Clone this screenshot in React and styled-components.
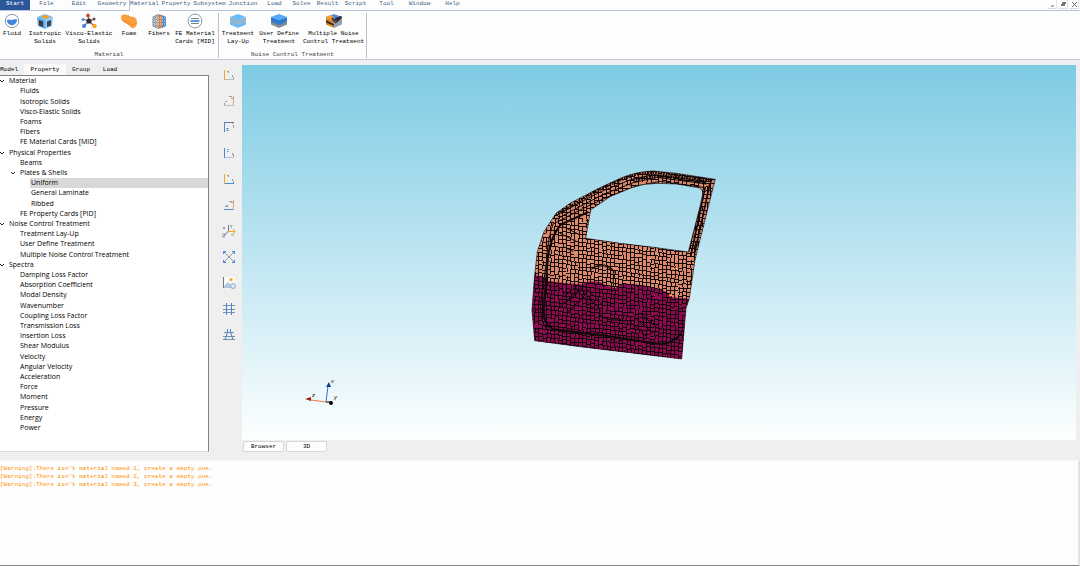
import React, { useState } from 'react';
import styled, { createGlobalStyle } from 'styled-components';

const mono = '"Liberation Mono", monospace';

const GlobalStyle = createGlobalStyle`
  * {
    box-sizing: border-box;
  }

  body {
    margin: 0;
    background-color: #efefef;
    font-family: ${mono};
    font-size: 6px;
    color: #111;
  }

  button {
    margin: 0;
    padding: 0;
    border: none;
    background: none;
    font: inherit;
    color: inherit;
    cursor: pointer;
  }
`;

const Window = styled.div`
  display: flex;
  flex-direction: column;
  height: 100vh;
  overflow: hidden;
`;

const MenuBar = styled.nav`
  display: flex;
  flex: none;
  height: 11px;
  background-color: #fdfdfd;
  border-bottom: 1px solid #b4c6de;
`;

const MenuItem = styled.button`
  width: ${(props) => props.$width}px;
  height: ${(props) => (props.$active ? 11 : 10)}px;
  line-height: 8px;
  padding-bottom: ${(props) => (props.$active ? 3 : 2)}px;
  color: ${(props) => (props.$primary ? '#fff' : '#3f6186')};
  background-color: ${(props) => (props.$primary ? '#2b579a' : '#fdfdfd')};
  border-left: ${(props) => (props.$active ? '1px solid #b4c6de' : 'none')};
  white-space: nowrap;
`;

const WindowControls = styled.div`
  display: flex;
  gap: 2px;
  margin-left: auto;
  padding-right: 1px;
`;

const WindowButton = styled.button`
  display: flex;
  width: 9px;
  height: 9px;
  align-items: center;
  justify-content: center;
  background-color: #fff;
  border-right: 1px solid #e4e4e4;
  border-bottom: 1px solid #dcdcdc;
`;

const Ribbon = styled.div`
  display: flex;
  flex: none;
  height: 49px;
  background-color: #fdfdfd;
  border-bottom: 1px solid #bccad8;
`;

const RibbonGroup = styled.section`
  display: flex;
  flex-direction: column;
  margin: 2px 0 1px;
  border-right: 1px solid #bcc2c8;
`;

const RibbonTools = styled.div`
  display: flex;
  flex: 1;
`;

const RibbonButton = styled.button`
  display: flex;
  flex-direction: column;
  align-items: center;
  width: ${(props) => props.$width}px;
  line-height: 8px;
  white-space: pre;
  color: #000;

  svg {
    flex: none;
    margin-bottom: 1px;
  }
`;

const GroupLabel = styled.div`
  line-height: 7px;
  text-align: center;
  color: #444;
`;

const Main = styled.main`
  display: flex;
  flex: 1;
  min-height: 0;
`;

const Sidebar = styled.aside`
  display: flex;
  flex-direction: column;
  width: 209px;
  padding: 4px 0 8px;
`;

const TabList = styled.div`
  display: flex;
  flex: none;
  height: 11px;
`;

const Tab = styled.button`
  width: ${(props) => props.$width}px;
  background-color: ${(props) => (props.$active ? '#fafafa' : 'transparent')};
  color: #000;
  line-height: 10px;

  &:first-child {
    text-align: left;
  }
`;

const Tree = styled.div`
  display: flex;
  flex: 1;
  flex-direction: column;
  min-height: 0;
  padding-bottom: 18px;
  background-color: #fff;
  border-top: 1px solid #828387;
  border-right: 1px solid #828387;
  border-bottom: 1px solid #dcdcdc;
  font-family: "Open Sans", sans-serif;
  font-size: 7px;
  color: #000;
`;

const TreeRow = styled.div`
  display: flex;
  flex: 1;
  min-height: 0;
  padding-left: ${(props) => props.$level * 11}px;
`;

const Toggle = styled.span`
  display: flex;
  width: 8px;
  align-items: center;
`;

const TreeLabel = styled.button`
  display: flex;
  flex: 1;
  align-items: center;
  padding-left: 1px;
  line-height: 10px;
  text-align: left;
  white-space: nowrap;
  background-color: ${(props) => (props.$selected ? '#d8d8d8' : 'transparent')};
`;

const ViewTools = styled.div`
  display: flex;
  flex-direction: column;
  align-items: center;
  gap: 10px;
  width: 33px;
  padding: 7px 0 0 6px;
`;

const ViewButton = styled.button`
  display: flex;
  width: 16px;
  height: 16px;
`;

const Workspace = styled.div`
  display: flex;
  flex: 1;
  flex-direction: column;
  min-width: 0;
  padding: 5px 4px 8px 0;
`;

const Viewport = styled.div`
  flex: 1;
  min-height: 0;
  background: linear-gradient(#7ecbe4, #fdffff);

  svg {
    display: block;
    width: 100%;
    height: 100%;
  }
`;

const ViewTabs = styled.div`
  display: flex;
  gap: 2px;
  padding: 1px 0 0 1px;
`;

const ViewTab = styled.button`
  width: 41px;
  height: 11px;
  color: #000;
  background-color: #fdfdfd;
  border: 1px solid #d6d6d6;
  border-radius: 2px;
  line-height: 8px;
`;

const Log = styled.div`
  flex: none;
  height: 106px;
  padding-top: 4px;
  background-color: #fdfdfd;
  border-top: 1px solid #f6f6f6;
  border-right: 2px solid #e2e2e2;
  border-bottom: 1px solid #828387;
  line-height: 8px;
  color: #ff9000;
  white-space: pre;
`;

const menus = [
  ['Start', 30],
  ['File', 33],
  ['Edit', 32],
  ['Geometry', 34],
  ['Material', 30],
  ['Property', 34],
  ['Subsystem', 33],
  ['Junction', 34],
  ['Load', 29],
  ['Solve', 25],
  ['Result', 27],
  ['Script', 29],
  ['Tool', 33],
  ['Window', 33],
  ['Help', 33],
];

// [label, level, has children]
const treeItems = [
  ['Material', 0, true],
  ['Fluids', 1],
  ['Isotropic Solids', 1],
  ['Visco-Elastic Solids', 1],
  ['Foams', 1],
  ['Fibers', 1],
  ['FE Material Cards [MID]', 1],
  ['Physical Properties', 0, true],
  ['Beams', 1],
  ['Plates & Shells', 1, true],
  ['Uniform', 2],
  ['General Laminate', 2],
  ['Ribbed', 2],
  ['FE Property Cards [PID]', 1],
  ['Noise Control Treatment', 0, true],
  ['Treatment Lay-Up', 1],
  ['User Define Treatment', 1],
  ['Multiple Noise Control Treatment', 1],
  ['Spectra', 0, true],
  ['Damping Loss Factor', 1],
  ['Absorption Coefficient', 1],
  ['Modal Density', 1],
  ['Wavenumber', 1],
  ['Coupling Loss Factor', 1],
  ['Transmission Loss', 1],
  ['Insertion Loss', 1],
  ['Shear Modulus', 1],
  ['Velocity', 1],
  ['Angular Velocity', 1],
  ['Acceleration', 1],
  ['Force', 1],
  ['Moment', 1],
  ['Pressure', 1],
  ['Energy', 1],
  ['Power', 1],
];

const Icon = ({ children }) => (
  <svg width="16" height="16" viewBox="0 0 16 16" fill="none" aria-hidden="true">
    {children}
  </svg>
);

const FluidIcon = () => (
  <Icon>
    <circle cx="8" cy="8" r="6.700" fill="#fff" stroke="#8796a8" />
    <path d="M3 7c2-1.600 3 .6 5 0s3-1.400 5-.4c.2 3-2 5.600-5 5.600S3 10 3 7z" fill="#3f86dc" />
  </Icon>
);

const CubeIcon = () => (
  <Icon>
    <path d="M0 4l8-3 8 3-8 3z" fill="#78c0f4" />
    <path d="M4 3.600L8 2l5 1.600L8 6z" fill="#ffa01e" />
    <path d="M0 4l8 3v9l-7-3z" fill="#58a8ea" />
    <path d="M2 7l4 1.600V14l-4-1.600z" fill="#4b3432" />
    <path d="M16 4L8 7v9l7-3z" fill="#8fc8f4" />
    <path d="M14 7l-4 1.600V14l4-1.600z" fill="#3f464f" />
  </Icon>
);

const MoleculeIcon = () => (
  <Icon>
    <path d="M8 8L7 2M8 8L2 6M8 8l5-2M8 8l-5 5M8 8l5 5" stroke="#70727c" strokeWidth="1.300" />
    <circle cx="8" cy="8" r="2.600" fill="#38282c" />
    <circle cx="7" cy="2.500" r="2" fill="#c2572b" />
    <circle cx="2" cy="6.500" r="1.500" fill="#4a8ee0" />
    <circle cx="13" cy="6" r="1.500" fill="#6a473f" />
    <circle cx="3" cy="13" r="2" fill="#3f86dc" />
    <circle cx="13.500" cy="13" r="2.200" fill="#ffa01e" />
  </Icon>
);

const FoamIcon = () => (
  <Icon>
    <path d="M0 4c0-3 4-3 7-2 2 1 3 2 5 2 3 0 4 3 4 6s-3 6-5 5-3-3-5-4-6-3-6-7z" fill="#fa9d3c" />
    <path d="M1 7c3 2 6 2 8 4 2 1 4 0 6-1" stroke="#f0902c" />
  </Icon>
);

const FibersIcon = () => (
  <Icon>
    <path d="M1 4l6-3v15l-6-3z" fill="#a9b4bd" />
    <path d="M7 1l4 1v13l-4 1z" fill="#d88c5b" />
    <path d="M11 2l4 2v9l-4 2z" fill="#4f8fd8" />
    <path d="M3 3v11M5 2v13M9 2v13M13 3v11" stroke="#6f767e" strokeDasharray="1 1" />
    <path d="M1 5h14M1 8h14M1 11h14" stroke="#eee1d5" strokeDasharray="1 1" />
  </Icon>
);

const CardIcon = () => (
  <Icon>
    <circle cx="8" cy="8" r="6.900" fill="#fff" stroke="#8796a8" />
    <path d="M4 5.500h8M4 10.500h8" stroke="#7d8791" />
    <path d="M3.500 8h9" stroke="#2f80dc" strokeWidth="1.600" />
  </Icon>
);

const LayersIcon = ({ top, middle, bottom }) => (
  <Icon>
    <path d="M0 8l8 3 8-3v3.500L8 15l-8-3.500z" fill={bottom} />
    <path d="M0 4l8 3 8-3v4.500L8 12 0 8.500z" fill={middle} />
    <path d="M0 4l8-3 8 3-8 3.500z" fill={top} />
  </Icon>
);

const MultipleIcon = () => (
  <Icon>
    <path d="M0 4l8-3 8 3-8 4z" fill="#4f8fdf" />
    <path d="M0 4l5-2 3 3-4 2z" fill="#ffa01e" />
    <path d="M0 4l8 4v7l-8-3.500z" fill="#e08b2b" />
    <path d="M0 7l8 4v2L0 9.500z" fill="#3f3130" />
    <path d="M16 4L8 8v7l8-3.500z" fill="#93a2b2" />
    <path d="M16 4L8 8 6 5M9 6l5-2v2l-5 4" stroke="#34282c" strokeWidth="1.500" />
  </Icon>
);

const ribbonGroups = [
  {
    label: 'Material',
    tools: [
      ['Fluid', 24, <FluidIcon />],
      ['Isotropic\nSolids', 42, <CubeIcon />],
      ['Visco-Elastic\nSolids', 46, <MoleculeIcon />],
      ['Foam', 34, <FoamIcon />],
      ['Fibers', 26, <FibersIcon />],
      ['FE Material\nCards [MID]', 46, <CardIcon />],
    ],
  },
  {
    label: 'Noise Control Treatment',
    tools: [
      ['Treatment\nLay-Up', 38, <LayersIcon top="#6bbcf6" middle="#93b6cc" bottom="#6bbcf6" />],
      ['User Define\nTreatment', 44, <LayersIcon top="#55a8fa" middle="#2f78cc" bottom="#858c90" />],
      ['Multiple Noise\nControl Treatment', 65, <MultipleIcon />],
    ],
  },
];

const orange = '#ffa21c';
const salmon = '#f2a25c';
const blue = '#4a8ade';
const pale = '#b4c4d2';
const slate = '#6c7a8a';

const Axis = ({ right, vColor, top, hColor, marks }) => (
  <Icon>
    <path d={marks} stroke="#98a2ac" />
    <path d={`M3 ${top ? 3.5 : 12.5}h10`} stroke={hColor} />
    <path d={`M${right ? 12.5 : 3.5} 3v10`} stroke={vColor} />
  </Icon>
);

const viewTools = [
  ['Front', <Axis vColor={orange} hColor={pale} marks="M6 4.500h2M7 5.500h1M11.500 8v2M12.500 10v3" />],
  ['Back', <Axis right vColor={salmon} hColor={pale} marks="M8 3.500h3M10 5.500h2M4 8.500h2M3.500 10v3" />],
  ['Top', <Axis top vColor={blue} hColor={slate} marks="M5 9.500h3M6 10.500h1M5 11.500h3M11.500 3v2M12.500 6v3" />],
  ['Bottom', <Axis vColor={blue} hColor={pale} marks="M6 4.500h2M6 6.500h2M11.500 8v2M12.500 9v3" />],
  ['Left', <Axis vColor={orange} hColor={blue} marks="M6 4.500h2M7 5.500h1M11.500 8v2M12.500 10v2" />],
  ['Right', <Axis right vColor={salmon} hColor={blue} marks="M8 4.500h3M10 5.500h2M5 8.500h2M4 9.500h3" />],
  [
    'Isometric',
    <Icon>
      <path d="M7.500 8V2M7.500 8L3 13" stroke={slate} />
      <path d="M8 8.500h6M12 6l2 2.500-2 2.500" stroke={orange} />
      <path d="M2 4l2 2M2 6l2-2M9 2l2 2M11 2l-1 3M10 12h3M1 11h3l-3 3h3" stroke="#98a2ac" />
    </Icon>,
  ],
  [
    'Fit',
    <Icon>
      <path d="M4 4l8 8M12 4l-8 8" stroke="#8c9aaa" />
      <path d="M2.500 5V2.500H5M11 2.500h2.500V5M13.500 11v2.500H11M5 13.500H2.500V11M3 3l1 1M13 3l-1 1M3 13l1-1M13 13l-1-1" stroke="#3f86dc" />
    </Icon>,
  ],
  [
    'Snapshot',
    <Icon>
      <path d="M2 2h12v11H2z" fill="#fafafa" />
      <path d="M2.500 2v11" stroke={slate} />
      <path d="M3 13V11l4-4 3 3 2-1v4z" fill="#b4cadc" />
      <circle cx="10" cy="4.500" r="1.600" fill={orange} />
      <circle cx="12" cy="11" r="2.500" fill="#d7e7f3" stroke="#8fb2d4" />
    </Icon>,
  ],
  [
    'Grid',
    <Icon>
      <path d="M2 4.500h12M2 8.500h12M2 11.500h12" stroke="#8291a0" />
      <path d="M5.500 2v12M10.500 2v12" stroke="#3f86dc" />
    </Icon>,
  ],
  [
    'Perspective grid',
    <Icon>
      <path d="M3 5.500h10M2 9.500h12M2 12.500h12" stroke="#8291a0" />
      <path d="M6.500 2v3L4 13M9.500 2v3l2.500 8" stroke="#3f86dc" />
    </Icon>,
  ],
];

// Element edges: a broken quad grid over the door panel
const buildMesh = () => {
  let seed = 7;
  const random = () => {
    seed = (seed * 16807) % 2147483647;
    return seed / 2147483647;
  };
  let d = '';
  for (let y = 0; y < 640; y += 12) {
    for (let x = 30; x < 600; x += 12) {
      const py = y + Math.round((x * 13) / 100 / 3) * 3 - 30;
      const jx = random() > 0.75 ? 3 : 0;
      const jy = random() > 0.75 ? 3 : 0;
      if (random() > 0.06) d += `M${x} ${py + jy + 1}h12`;
      if (random() > 0.06) d += `M${x + jx + 1} ${py}v12`;
    }
  }
  return d;
};

const mesh = buildMesh();

const outline =
  'M44 345L52 275 72 215 108 160 150 130 230 88 300 55Q350 34 400 33L470 40 586 58 575 100 550 200 525 300 508 415 498 445 485 597 330 578 180 560 44 542 36 450z';
const glass = 'M212 150L270 110 330 85Q370 70 410 70L470 72 540 84Q550 90 548 104L540 140 505 276 400 262 300 250 197 235z';
const lower =
  'M30 344L44 345 75 352 83 363 140 370 185 373 210 364 240 366 262 378 285 384 310 370 370 376 420 388 448 400 455 412 520 418 520 610 30 610z';

const Scene = () => (
  <svg viewBox="242 65 834 375" role="img" aria-label="Door panel mesh">
    <defs>
      <clipPath id="door">
        <path d={`${outline}${glass}`} clipRule="evenodd" />
      </clipPath>
    </defs>
    <g transform="translate(520 160) scale(.3333)">
      <g clipPath="url(#door)" fill="none" stroke="#100809">
        <path d="M0 0h630v630H0z" fill="#dc8a6b" stroke="none" />
        <path d={lower} fill="#8b0a50" stroke="none" />
        <path d={mesh} strokeWidth="3" shapeRendering="crispEdges" />
        <path
          d="M105 180L160 150 250 103 340 68 410 52 560 72M100 192L180 150 260 112 350 78 420 64 550 82M120 160L240 96 330 60 400 44 575 66"
          strokeWidth="3"
        />
        <path d="M108 165L230 92 300 60 350 42 400 38 470 44 580 62" strokeWidth="8" strokeDasharray="5 3" />
        <path d="M340 60L400 48 470 52 560 68" strokeWidth="10" strokeDasharray="4 4" />
        <path d="M205 156L122 194Q92 230 84 290L72 440Q66 490 100 508L260 528 420 552Q450 556 485 520" strokeWidth="6" />
        <path d="M100 190Q82 240 80 300L62 430Q58 490 86 512" strokeWidth="3" />
        <path d="M556 80L512 290M570 70L524 280M548 100L505 276" strokeWidth="5" />
        <path
          d="M135 430l55-45M130 410l40-30M160 376l60 70M175 376l70 80M190 376l60 60M120 440l60-55M140 460l60-60M225 320q30-15 55 10v50M210 330q40-30 78 10M240 465q30 25 70 10M340 470l60 50M360 460l60 50M330 485l50 45M130 200l50 25M120 220l50 25M140 265l20 10"
          strokeWidth="3"
        />
      </g>
      <path d={`${outline}${glass}`} fill="none" stroke="#1c1216" strokeWidth="2" />
      <path d="M466 325h9M410 366h6M448 406h8" stroke="#ffb45a" strokeWidth="6" />
    </g>
    <path d="M326 402l2-16" stroke="#2f6fc8" />
    <path d="M326 387l3-5 2 5z" fill="#123f96" />
    <path d="M326 402l-15-2" stroke="#f0783c" />
    <path d="M305 399l6-2v4z" fill="#8b2517" />
    <path d="M326 402h4" stroke="#000" />
    <circle cx="331" cy="403" r="2" fill="#000" />
    <g fill="#111" fontFamily="Liberation Sans, sans-serif" fontSize="6" fontStyle="italic">
      <text x="331" y="383">v</text>
      <text x="312" y="397">z</text>
      <text x="334" y="399">y</text>
    </g>
  </svg>
);

const App = () => {
  const [selected, setSelected] = useState('Uniform');

  return (
    <Window>
      <GlobalStyle />
      <MenuBar>
        {menus.map(([label, width]) => (
          <MenuItem key={label} $width={width} $primary={label === 'Start'} $active={label === 'Material'}>
            {label}
          </MenuItem>
        ))}
        <WindowControls>
          <WindowButton aria-label="Minimize">
            <svg width="5" height="5"><path d="M1 4h3" stroke="#666" /></svg>
          </WindowButton>
          <WindowButton aria-label="Restore">
            <svg width="5" height="5"><path d="M1 0h4v2H4v2H0V2h1z" fill="#777" /></svg>
          </WindowButton>
          <WindowButton aria-label="Close">
            <svg width="5" height="5"><path d="M0 0l5 5M5 0L0 5" stroke="#666" /></svg>
          </WindowButton>
        </WindowControls>
      </MenuBar>

      <Ribbon>
        {ribbonGroups.map((group) => (
          <RibbonGroup key={group.label}>
            <RibbonTools>
              {group.tools.map(([label, width, icon]) => (
                <RibbonButton key={label} $width={width}>
                  {icon}
                  {label}
                </RibbonButton>
              ))}
            </RibbonTools>
            <GroupLabel>{group.label}</GroupLabel>
          </RibbonGroup>
        ))}
      </Ribbon>

      <Main>
        <Sidebar>
          <TabList role="tablist">
            <Tab role="tab" $width={24}>Model</Tab>
            <Tab role="tab" $width={42} $active aria-selected="true">Property</Tab>
            <Tab role="tab" $width={30}>Group</Tab>
            <Tab role="tab" $width={28}>Load</Tab>
          </TabList>
          <Tree role="tree">
            {treeItems.map(([label, level, parent]) => (
              <TreeRow key={label} $level={level} role="treeitem">
                <Toggle>
                  {parent && (
                    <svg width="5" height="4"><path d="M0 1l2 2 2-2" fill="none" stroke="#222" /></svg>
                  )}
                </Toggle>
                <TreeLabel $selected={label === selected} onClick={() => setSelected(label)}>
                  {label}
                </TreeLabel>
              </TreeRow>
            ))}
          </Tree>
        </Sidebar>

        <ViewTools>
          {viewTools.map(([label, icon]) => (
            <ViewButton key={label} aria-label={label}>{icon}</ViewButton>
          ))}
        </ViewTools>

        <Workspace>
          <Viewport>
            <Scene />
          </Viewport>
          <ViewTabs>
            <ViewTab>Browser</ViewTab>
            <ViewTab>3D</ViewTab>
          </ViewTabs>
        </Workspace>
      </Main>

      <Log role="log">
        {[1, 2, 3].map((n) => (
          <div key={n}>{`[Warning]:There isn't material named ${n}, create a empty one.`}</div>
        ))}
      </Log>
    </Window>
  );
};

export default App;
